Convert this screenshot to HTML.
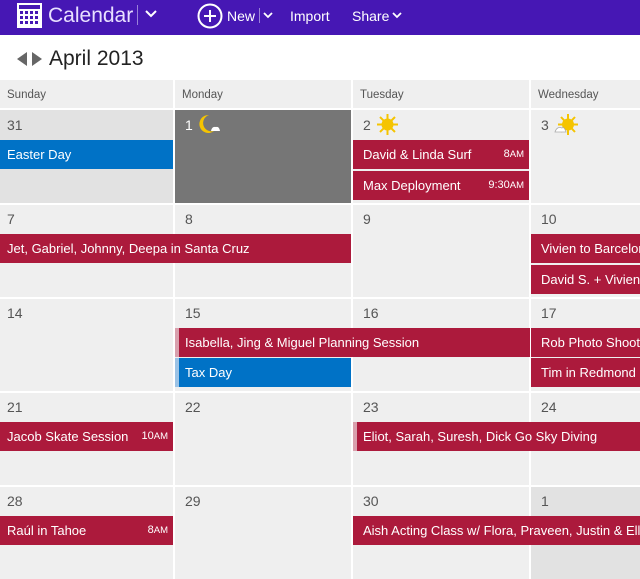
<!DOCTYPE html>
<html><head><style>
*{margin:0;padding:0;box-sizing:border-box}
body{width:640px;height:579px;overflow:hidden;background:#fff;font-family:"Liberation Sans",sans-serif;position:relative}
.top{position:absolute;left:0;top:0;width:640px;height:35px;background:#4617b4;color:#fff}
.a{position:absolute;white-space:nowrap}
.cell{position:absolute;background:#efefef}
.num{position:absolute;font-size:14px;color:#555}
.ev{position:absolute;height:29px;background:#ac1a3c;color:#fff;font-size:13px;line-height:29px;padding-left:7px;white-space:nowrap;overflow:hidden}
.ev .t{position:absolute;right:5px;top:0;font-size:11px}
.ev .t small{font-size:9.5px}
.b{background:#0072c6}
.hd{position:absolute;top:80px;height:28px;background:#efefef;font-size:11.5px;color:#555;line-height:30px;padding-left:7px}
</style></head><body>
<div class="top">
<svg class="a" style="left:17px;top:3px" width="25" height="25" viewBox="0 0 25 25"><rect x="0" y="0" width="25" height="25" fill="#fff"/><g fill="#4617b4"><rect x="2" y="2" width="21" height="4"/>
<rect x="3" y="8" width="3" height="3"/><rect x="8" y="8" width="3" height="3"/><rect x="13" y="8" width="3" height="3"/><rect x="18" y="8" width="3" height="3"/>
<rect x="3" y="13" width="3" height="3"/><rect x="8" y="13" width="3" height="3"/><rect x="13" y="13" width="3" height="3"/><rect x="18" y="13" width="3" height="3"/>
<rect x="3" y="18" width="3" height="3"/><rect x="8" y="18" width="3" height="3"/><rect x="13" y="18" width="3" height="3"/><rect x="18" y="18" width="3" height="3"/></g></svg>
<div class="a" style="left:48px;top:4px;font-size:21px;color:#e8e0ff">Calendar</div>
<div class="a" style="left:137px;top:5px;width:1px;height:20px;background:#9b82d9"></div>
<svg class="a" style="left:145px;top:10px" width="12" height="8"><path d="M1 1 L6 6 L11 1" stroke="#fff" stroke-width="2" fill="none"/></svg>
<svg class="a" style="left:197px;top:3px" width="26" height="26"><circle cx="13" cy="13" r="11.5" stroke="#fff" stroke-width="2" fill="none"/><path d="M13 7V19M7 13H19" stroke="#fff" stroke-width="2"/></svg>
<div class="a" style="left:227px;top:8px;font-size:14px">New</div>
<div class="a" style="left:259px;top:8px;width:1px;height:15px;background:#9b82d9"></div>
<svg class="a" style="left:263px;top:12px" width="10" height="7"><path d="M1 1 L5 5 L9 1" stroke="#fff" stroke-width="1.8" fill="none"/></svg>
<div class="a" style="left:290px;top:8px;font-size:14px">Import</div>
<div class="a" style="left:352px;top:8px;font-size:14px">Share</div>
<svg class="a" style="left:392px;top:12px" width="10" height="7"><path d="M1 1 L5 5 L9 1" stroke="#fff" stroke-width="1.8" fill="none"/></svg>
</div>
<svg class="a" style="left:16px;top:51px" width="28" height="16"><path d="M1 8 L11 1 V15Z M16 1 L26 8 L16 15Z" fill="#666"/></svg>
<div class="a" style="left:49px;top:47px;font-size:21px;color:#222">April 2013</div>

<div class="hd" style="left:0;width:173px">Sunday</div>
<div class="hd" style="left:175px;width:176px">Monday</div>
<div class="hd" style="left:353px;width:176px">Tuesday</div>
<div class="hd" style="left:531px;width:109px">Wednesday</div>

<div class="cell" style="left:0;top:110px;width:173px;height:93px;background:#e2e2e2"></div>
<div class="cell" style="left:175px;top:110px;width:176px;height:93px;background:#767676"></div>
<div class="cell" style="left:353px;top:110px;width:176px;height:93px"></div>
<div class="cell" style="left:531px;top:110px;width:109px;height:93px"></div>
<div class="cell" style="left:0;top:205px;width:173px;height:92px"></div>
<div class="cell" style="left:175px;top:205px;width:176px;height:92px"></div>
<div class="cell" style="left:353px;top:205px;width:176px;height:92px"></div>
<div class="cell" style="left:531px;top:205px;width:109px;height:92px"></div>
<div class="cell" style="left:0;top:299px;width:173px;height:92px"></div>
<div class="cell" style="left:175px;top:299px;width:176px;height:92px"></div>
<div class="cell" style="left:353px;top:299px;width:176px;height:92px"></div>
<div class="cell" style="left:531px;top:299px;width:109px;height:92px"></div>
<div class="cell" style="left:0;top:393px;width:173px;height:92px"></div>
<div class="cell" style="left:175px;top:393px;width:176px;height:92px"></div>
<div class="cell" style="left:353px;top:393px;width:176px;height:92px"></div>
<div class="cell" style="left:531px;top:393px;width:109px;height:92px"></div>
<div class="cell" style="left:0;top:487px;width:173px;height:92px"></div>
<div class="cell" style="left:175px;top:487px;width:176px;height:92px"></div>
<div class="cell" style="left:353px;top:487px;width:176px;height:92px"></div>
<div class="cell" style="left:531px;top:487px;width:109px;height:92px;background:#e2e2e2"></div>

<div class="num" style="left:7px;top:117px">31</div>
<div class="num" style="left:185px;top:117px;color:#fff">1</div>
<svg class="a" style="left:198px;top:114px" width="24" height="20"><path d="M11 1 A9 9 0 1 0 16 17 A8 8 0 0 1 11 1Z" fill="#f5c400"/><path d="M13 17 Q14 12 18 13 Q21 12 22 17Z" fill="#fff"/></svg>
<div class="num" style="left:363px;top:117px">2</div>
<svg class="a" style="left:377px;top:114px" width="21" height="21"><g stroke="#f5c400" stroke-width="2"><path d="M10.5 0V21M0 10.5H21M3 3L18 18M18 3L3 18"/></g><circle cx="10.5" cy="10.5" r="6" fill="#f5c400"/></svg>
<div class="num" style="left:541px;top:117px">3</div>
<svg class="a" style="left:553px;top:114px" width="26" height="21"><g stroke="#f5c400" stroke-width="2"><path d="M15 0V21M5 10.5H25M8 3L22 18M22 3L8 18"/></g><circle cx="15" cy="10.5" r="6" fill="#f5c400"/><path d="M2 18 Q4 12 9 14 Q11 12 13 18Z" fill="#fff" stroke="#aaa" stroke-width="0.8"/></svg>

<div class="num" style="left:7px;top:211px">7</div>
<div class="num" style="left:185px;top:211px">8</div>
<div class="num" style="left:363px;top:211px">9</div>
<div class="num" style="left:541px;top:211px">10</div>
<div class="num" style="left:7px;top:305px">14</div>
<div class="num" style="left:185px;top:305px">15</div>
<div class="num" style="left:363px;top:305px">16</div>
<div class="num" style="left:541px;top:305px">17</div>
<div class="num" style="left:7px;top:399px">21</div>
<div class="num" style="left:185px;top:399px">22</div>
<div class="num" style="left:363px;top:399px">23</div>
<div class="num" style="left:541px;top:399px">24</div>
<div class="num" style="left:7px;top:493px">28</div>
<div class="num" style="left:185px;top:493px">29</div>
<div class="num" style="left:363px;top:493px">30</div>
<div class="num" style="left:541px;top:493px">1</div>

<div class="ev b" style="left:0;top:140px;width:173px">Easter Day</div>
<div class="ev" style="left:353px;top:140px;width:176px;padding-left:10px">David &amp; Linda Surf<span class="t">8<small>AM</small></span></div>
<div class="ev" style="left:353px;top:171px;width:176px;padding-left:10px">Max Deployment<span class="t">9:30<small>AM</small></span></div>
<div class="ev" style="left:0;top:234px;width:351px">Jet, Gabriel, Johnny, Deepa in Santa Cruz</div>
<div class="ev" style="left:531px;top:234px;width:109px;padding-left:10px">Vivien to Barcelona</div>
<div class="ev" style="left:531px;top:265px;width:109px;padding-left:10px">David S. + Vivien</div>
<div class="ev" style="left:175px;top:328px;width:355px;padding-left:6px;border-left:4px solid #d9a0ad">Isabella, Jing &amp; Miguel Planning Session</div>
<div class="ev" style="left:531px;top:328px;width:109px;padding-left:10px">Rob Photo Shoot</div>
<div class="ev b" style="left:175px;top:358px;width:176px;padding-left:6px;border-left:4px solid #9cc3e6">Tax Day</div>
<div class="ev" style="left:531px;top:358px;width:109px;padding-left:10px">Tim in Redmond</div>
<div class="ev" style="left:0;top:422px;width:173px">Jacob Skate Session<span class="t">10<small>AM</small></span></div>
<div class="ev" style="left:353px;top:422px;width:287px;padding-left:6px;border-left:4px solid #d9a0ad">Eliot, Sarah, Suresh, Dick Go Sky Diving</div>
<div class="ev" style="left:0;top:516px;width:173px">Raúl in Tahoe<span class="t">8<small>AM</small></span></div>
<div class="ev" style="left:353px;top:516px;width:287px;padding-left:10px">Aish Acting Class w/ Flora, Praveen, Justin &amp; Ella</div>
</body></html>
